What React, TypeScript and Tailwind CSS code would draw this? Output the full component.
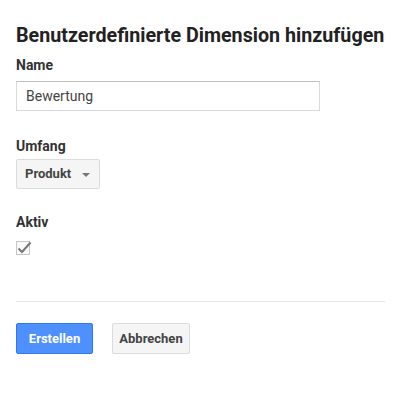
export default function App() {
  return (
    <div className="min-h-[394px] w-[416px] bg-white pl-4 pr-[31px] font-['Roboto',sans-serif]">
      <h1 className="pt-6 text-[19.7px] leading-6 font-bold whitespace-nowrap text-[#222]">
        Benutzerdefinierte Dimension hinzufügen
      </h1>

      <label className="mt-[7px] block text-sm leading-5 font-bold text-[#333]">Name</label>
      <input
        defaultValue="Bewertung"
        className="mt-[6px] block h-[30px] w-[304px] border border-[#d9d9d9] border-t-[#c0c0c0] px-[9px] text-sm text-[#444] outline-none"
      />

      <label className="mt-[25px] block text-sm leading-5 font-bold text-[#333]">Umfang</label>
      <button className="mt-[3px] flex h-[30px] w-[84px] items-center justify-between rounded-[2px] border border-[#dcdcdc] bg-[#f5f5f5] pr-[9px] pl-[8px] text-[13px] font-bold text-[#444]">
        Produkt
        <svg width="8" height="4" viewBox="0 0 8 4" className="mt-[2px]">
          <path d="M0 0h8L4 4z" fill="#777" />
        </svg>
      </button>

      <label className="mt-[23px] block text-sm leading-5 font-bold text-[#333]">Aktiv</label>
      <div className="mt-[9px] flex h-[14px] w-[14px] items-center justify-center border border-[#c6c6c6] bg-[#fafafa]">
        <svg width="15" height="13" viewBox="0 0 15 13" className="mb-[2px] ml-[2px] overflow-visible">
          <path d="M1.5 7.5L5 11L13.5 1.5" fill="none" stroke="#777" strokeWidth="2" />
        </svg>
      </div>

      <hr className="mt-[46px] border-t border-[#e5e5e5]" />

      <div className="mt-[21px] flex gap-[19px]">
        <button className="h-[31px] w-[77px] rounded-[2px] border border-[#3079ed] bg-[#4d90fe] text-[13px] font-bold text-white">
          Erstellen
        </button>
        <button className="h-[31px] w-[78px] rounded-[2px] border border-[#dcdcdc] bg-[#f5f5f5] text-[13px] font-bold text-[#444]">
          Abbrechen
        </button>
      </div>
    </div>
  );
}
